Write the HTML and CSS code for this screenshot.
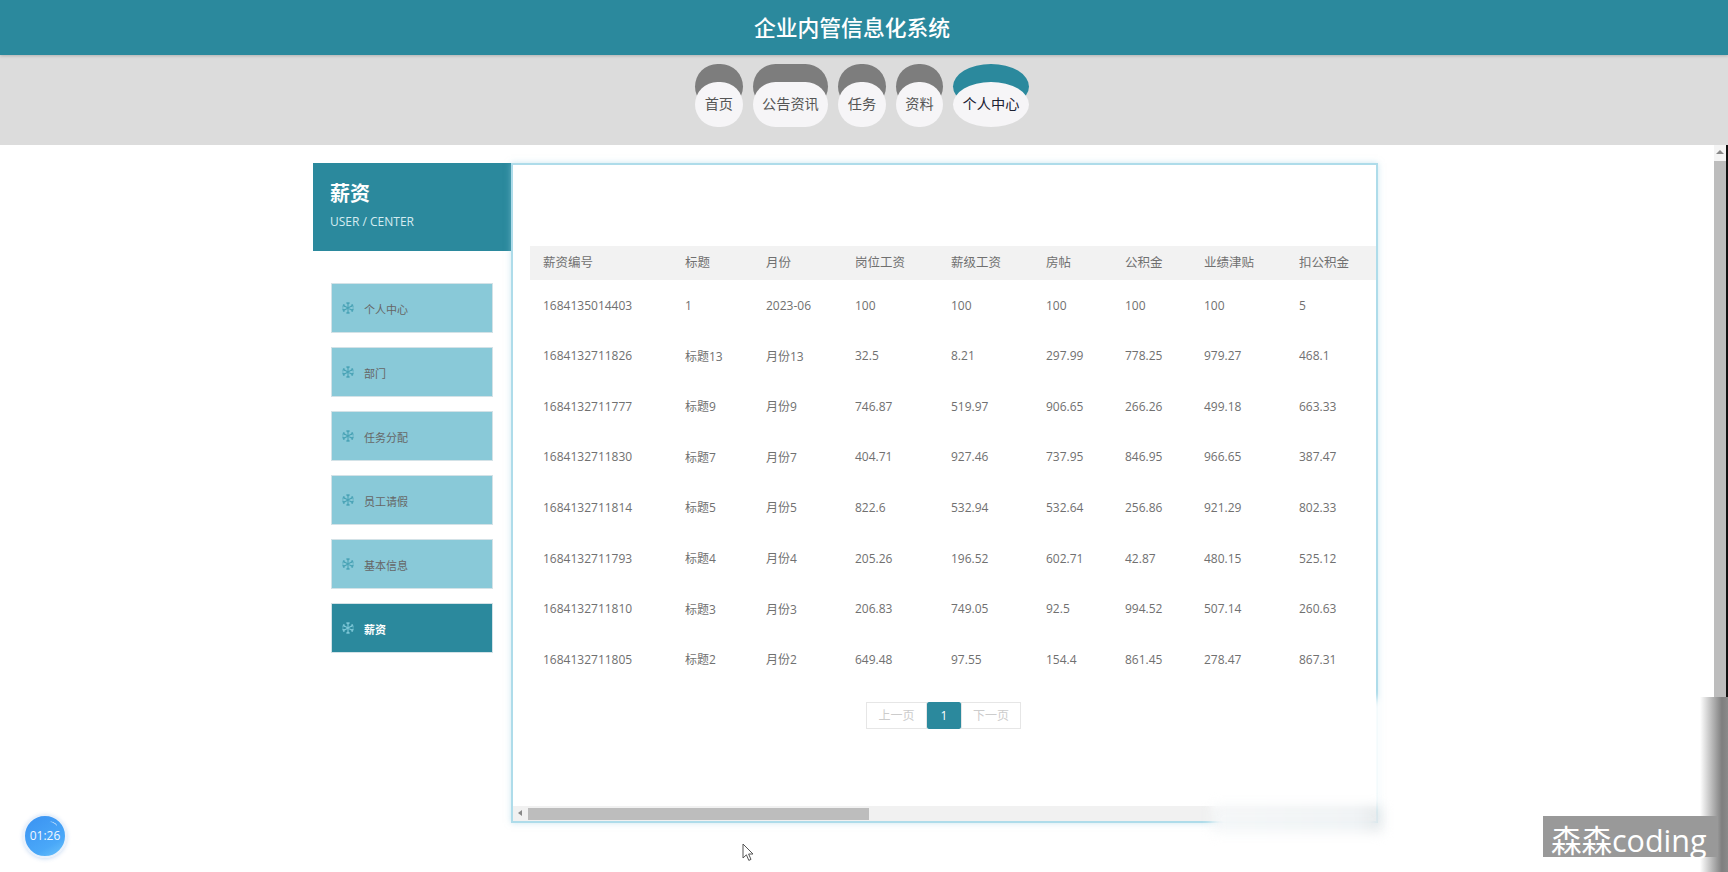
FILE: index.html
```html
<!DOCTYPE html>
<html lang="zh">
<head>
  <meta charset="UTF-8" />
  <title>企业内管信息化系统</title>
  <link rel="stylesheet" href="styles.css">
</head>
<body>
  <svg class="icon-defs" width="0" height="0">
    <symbol id="flake" viewBox="0 0 14 14">
      <path d="M7 1v12M1.8 4l10.4 6M1.8 10l10.4-6M5.4 1.6 7 3.2l1.6-1.6M5.4 12.4 7 10.8l1.6 1.6M1.2 6l2.2-.6L2.8 3.2M12.8 8l-2.2.6.6 2.2M1.2 8l2.2.6-.6 2.2M12.8 6l-2.2-.6.6-2.2" fill="none" stroke="currentColor" stroke-width="1.1"/>
    </symbol>
  </svg>

  <header class="top-title">企业内管信息化系统</header>

  <nav class="top-nav">
    <a class="nav-item"><span class="nav-label">首页</span></a>
    <a class="nav-item"><span class="nav-label">公告资讯</span></a>
    <a class="nav-item"><span class="nav-label">任务</span></a>
    <a class="nav-item"><span class="nav-label">资料</span></a>
    <a class="nav-item active"><span class="nav-label">个人中心</span></a>
  </nav>

  <div class="content">
    <aside class="sidebar">
      <div class="side-head">
        <h2>薪资</h2>
        <p>USER / CENTER</p>
      </div>
      <ul class="side-menu">
        <li><svg class="flake"><use href="#flake"/></svg>个人中心</li>
        <li><svg class="flake"><use href="#flake"/></svg>部门</li>
        <li><svg class="flake"><use href="#flake"/></svg>任务分配</li>
        <li><svg class="flake"><use href="#flake"/></svg>员工请假</li>
        <li><svg class="flake"><use href="#flake"/></svg>基本信息</li>
        <li class="active"><svg class="flake"><use href="#flake"/></svg>薪资</li>
      </ul>
    </aside>

    <main class="panel">
      <div class="table-wrap">
        <table class="salary-table">
          <thead>
            <tr><th class="c1">薪资编号</th><th class="c2">标题</th><th class="c3">月份</th><th class="c4">岗位工资</th><th class="c5">薪级工资</th><th class="c6">房帖</th><th class="c7">公积金</th><th class="c8">业绩津贴</th><th class="c9">扣公积金</th></tr>
          </thead>
          <tbody>
            <tr><td>1684135014403</td><td>1</td><td>2023-06</td><td>100</td><td>100</td><td>100</td><td>100</td><td>100</td><td>5</td></tr>
            <tr><td>1684132711826</td><td>标题13</td><td>月份13</td><td>32.5</td><td>8.21</td><td>297.99</td><td>778.25</td><td>979.27</td><td>468.1</td></tr>
            <tr><td>1684132711777</td><td>标题9</td><td>月份9</td><td>746.87</td><td>519.97</td><td>906.65</td><td>266.26</td><td>499.18</td><td>663.33</td></tr>
            <tr><td>1684132711830</td><td>标题7</td><td>月份7</td><td>404.71</td><td>927.46</td><td>737.95</td><td>846.95</td><td>966.65</td><td>387.47</td></tr>
            <tr><td>1684132711814</td><td>标题5</td><td>月份5</td><td>822.6</td><td>532.94</td><td>532.64</td><td>256.86</td><td>921.29</td><td>802.33</td></tr>
            <tr><td>1684132711793</td><td>标题4</td><td>月份4</td><td>205.26</td><td>196.52</td><td>602.71</td><td>42.87</td><td>480.15</td><td>525.12</td></tr>
            <tr><td>1684132711810</td><td>标题3</td><td>月份3</td><td>206.83</td><td>749.05</td><td>92.5</td><td>994.52</td><td>507.14</td><td>260.63</td></tr>
            <tr><td>1684132711805</td><td>标题2</td><td>月份2</td><td>649.48</td><td>97.55</td><td>154.4</td><td>861.45</td><td>278.47</td><td>867.31</td></tr>
          </tbody>
        </table>
      </div>

      <div class="pager">
        <span class="page-btn prev">上一页</span>
        <span class="page-num">1</span>
        <span class="page-btn">下一页</span>
      </div>

      <div class="h-scroll">
        <span class="arrow-left"></span>
        <span class="h-thumb"></span>
      </div>
    </main>
  </div>

  <!-- page scrollbar -->
  <div class="v-scroll">
    <span class="arrow-up"></span>
    <span class="v-thumb"></span>
  </div>

  <!-- video overlays -->
  <div class="smudge smudge-panel"></div>
  <div class="smudge smudge-bar"></div>
  <div class="smudge-edge"></div>
  <div class="timer">01:26</div>
  <div class="watermark">森森coding</div>
  <svg class="cursor" width="12" height="19" viewBox="0 0 12 19">
    <path d="M1 1v14l3.4-3.2 2.4 5.6 2.2-1-2.4-5.4H11z" fill="#fff" stroke="#555" stroke-width="1"/>
  </svg>
</body>
</html>
```
FILE: styles.css
```css
* {
  box-sizing: border-box;
}

html, body {
  height: 100%;
}

body {
  margin: 0;
  height: 872px;
  overflow: hidden;
  position: relative;
  background: #fff;
  color: #707070;
  font-family: "Open Sans", "Noto Sans CJK SC", sans-serif;
}

.icon-defs {
  position: absolute;
}

.top-title {
  height: 55px;
  line-height: 55px;
  padding-right: 24px;
  text-align: center;
  font-size: 21.8px;
  font-weight: 500;
  color: #fff;
  background: #2b899d;
  box-shadow: 0 1px 3px rgba(0, 0, 0, .2);
  position: relative;
}

.top-nav {
  height: 90px;
  padding: 9px 4px 0 0;
  display: flex;
  justify-content: center;
  gap: 10px;
  background: #dcdcdc;
}

.nav-item {
  padding-top: 18px;
  height: 63px;
  position: relative;
}

.nav-item::before {
  content: "";
  position: absolute;
  left: 0;
  top: 0;
  width: 100%;
  height: 45px;
  background: #7d7d7d;
  border-radius: 23px;
}

.nav-label {
  display: block;
  position: relative;
  height: 45px;
  line-height: 44px;
  padding: 0 9.5px;
  font-size: 14.2px;
  color: #555;
  background: #f6f5f7;
  border-radius: 23px;
}

.nav-item.active::before {
  background: #2b899d;
  border-radius: 50%;
}

.nav-item.active .nav-label {
  color: #1c2233;
  border-radius: 50%;
}

.content {
  display: flex;
  padding: 18px 0 0 313px;
}

.sidebar {
  width: 198px;
}

.side-head {
  height: 88px;
  padding: 17px 17px 0;
  color: #fff;
  background: #2b899d;
}

.side-head h2 {
  margin: 0;
  font-size: 20px;
  line-height: 28px;
}

.side-head p {
  margin: 6px 0 0;
  font-size: 12px;
  line-height: 16px;
  color: #d5ecf1;
}

.side-menu {
  list-style: none;
  margin: 32px 0 0 18px;
  padding: 0;
  width: 162px;
}

.side-menu li {
  height: 50px;
  margin-bottom: 14px;
  padding: 2px 0 0 9px;
  display: flex;
  align-items: center;
  font-size: 11px;
  color: #666;
  background: #89c9d8;
  border: 1px solid #d3e2e7;
}

.side-menu .flake {
  width: 14px;
  height: 14px;
  margin: -3px 9px 0 0;
  color: #4aa3b6;
}

.side-menu li.active {
  color: #fff;
  font-weight: bold;
  background: #2b899d;
}

.side-menu li.active .flake {
  color: #7cc6d6;
}

.panel {
  width: 867px;
  height: 660px;
  display: flex;
  flex-direction: column;
  background: #fff;
  border: 2px solid #aedcea;
  box-shadow: 0 0 6px rgba(150, 205, 225, .5);
}

.table-wrap {
  margin: 81px 0 0 17px;
  overflow: hidden;
}

.salary-table {
  width: 900px;
  table-layout: fixed;
  border-collapse: collapse;
  font-size: 12px;
}

.salary-table th,
.salary-table td {
  padding: 0 0 0 13px;
  text-align: left;
  white-space: nowrap;
  font-weight: normal;
}

.salary-table th {
  height: 34px;
  padding-bottom: 3px;
  font-size: 12.5px;
  background: #f2f2f2;
}

.salary-table td {
  height: 50.55px;
}

.c1 { width: 142px; }
.c2 { width: 81px; }
.c3 { width: 89px; }
.c4 { width: 96px; }
.c5 { width: 95px; }
.c6 { width: 79px; }
.c7 { width: 79px; }
.c8 { width: 95px; }
.c9 { width: 144px; }

.pager {
  margin: 18px 0 0 353px;
  display: flex;
  height: 27px;
  font-size: 12px;
}

.page-btn {
  width: 60px;
  line-height: 25px;
  text-align: center;
  color: #ccc;
  border: 1px solid #e6e6e6;
}

.page-btn.prev {
  width: 61px;
}

.page-num {
  width: 34px;
  line-height: 27px;
  text-align: center;
  color: #fff;
  background: #2b899d;
  border-radius: 2px;
}

.h-scroll {
  margin-top: auto;
  height: 15px;
  padding: 2px 0 1px 15px;
  position: relative;
  background: #f1f1f1;
}

.h-thumb {
  display: block;
  width: 341px;
  height: 12px;
  background: #bdbdbd;
}

.arrow-left {
  position: absolute;
  left: 5px;
  top: 4px;
  border: 3.5px solid transparent;
  border-left: 0;
  border-right: 4px solid #888;
}

.v-scroll {
  position: absolute;
  top: 145px;
  right: 0;
  width: 14px;
  height: 560px;
  background: #f4f4f4;
  border-right: 2px solid #111;
}

.v-thumb {
  display: block;
  margin-top: 16px;
  height: 540px;
  background: #bdbdbd;
}

.arrow-up {
  position: absolute;
  left: 2px;
  top: 5px;
  border: 4px solid transparent;
  border-top: 0;
  border-bottom: 4px solid #888;
}

.smudge {
  position: absolute;
  background: #fff;
  filter: blur(4px);
}

.smudge-panel {
  left: 1212px;
  top: 699px;
  width: 170px;
  height: 110px;
}

.smudge-bar {
  left: 1212px;
  top: 806px;
  width: 170px;
  height: 26px;
  background: linear-gradient(to right, #f5f7f8, #f0f3f5 85%, #e4e8ea);
  filter: blur(6px);
}

.smudge-edge {
  position: absolute;
  right: 0;
  top: 697px;
  width: 28px;
  height: 175px;
  background: linear-gradient(to right, #fff, #7f7f7f 78%, #8a8a8a);
}

.timer {
  position: absolute;
  left: 23px;
  top: 814px;
  width: 44px;
  height: 44px;
  line-height: 40px;
  text-align: center;
  font-size: 12px;
  color: #f2f8ff;
  background: linear-gradient(150deg, #3a92f2, #4aa8f8 70%, #6cc4fb);
  border: 2px solid #e9f1fb;
  border-radius: 50%;
  box-shadow: 0 1px 4px rgba(80, 140, 220, .3);
}

.timer::after {
  content: "";
  position: absolute;
  right: 8px;
  top: 6px;
  width: 8px;
  height: 4px;
  border-top: 1px solid rgba(255, 255, 255, .6);
  border-radius: 50%;
  transform: rotate(28deg);
}

.watermark {
  position: absolute;
  left: 1543px;
  top: 816px;
  width: 175px;
  height: 41px;
  padding-left: 8px;
  font-size: 30.5px;
  line-height: 49px;
  color: #fff;
  background: #999;
  white-space: nowrap;
}

.cursor {
  position: absolute;
  left: 742px;
  top: 843px;
}
```
